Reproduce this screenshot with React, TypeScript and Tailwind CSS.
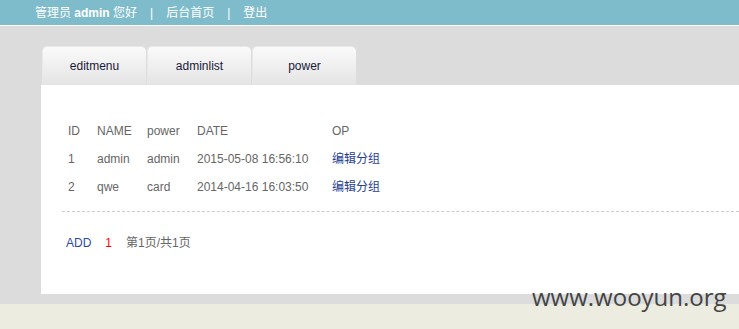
import React from 'react'

const rows = [
  { id: '1', name: 'admin', power: 'admin', date: '2015-05-08 16:56:10' },
  { id: '2', name: 'qwe', power: 'card', date: '2014-04-16 16:03:50' },
]

const tabs = ['editmenu', 'adminlist', 'power']

export default function App() {
  return (
    <div className="relative h-[329px] w-[739px] overflow-hidden bg-[#ecede0] font-['Liberation_Sans','Noto_Sans_CJK_SC',sans-serif] text-[12px]">
      {/* top bar */}
      <div className="flex h-[26px] items-center border-b border-white bg-[#7fbccb] pl-[35px] text-white">
        <span>管理员 <b>admin</b> 您好</span>
        <span className="mx-[13px]">|</span>
        <span>后台首页</span>
        <span className="mx-[13px]">|</span>
        <span>登出</span>
      </div>

      <div className="h-[278px] bg-[#dcdcdc] pl-[41px] pt-[20px]">
        {/* tabs */}
        <div className="flex gap-[1px] pl-[1px]">
          {tabs.map((t) => (
            <div
              key={t}
              className="flex h-[39px] w-[104px] items-center justify-center rounded-t-[5px] border-l border-t border-[#e8e8e8] bg-gradient-to-b from-[#fafafa] to-[#e4e4e4] text-[#1a1a3a]"
            >
              {t}
            </div>
          ))}
        </div>

        {/* panel */}
        <div className="h-[209px] bg-white pt-[32px] text-[#666]">
          <div className="pl-[27px]">
            {[{ id: 'ID', name: 'NAME', power: 'power', date: 'DATE' }, ...rows].map((r, i) => (
              <div key={i} className="flex h-[28px] items-center">
                <span className="w-[29px]">{r.id}</span>
                <span className="w-[50px]">{r.name}</span>
                <span className="w-[50px]">{r.power}</span>
                <span className="w-[135px]">{r.date}</span>
                {i === 0 ? (
                  <span>OP</span>
                ) : (
                  <a className="text-[#1f3f94]">编辑分组</a>
                )}
              </div>
            ))}
          </div>
          <div className="ml-[21px] mt-[10px] border-t border-dashed border-[#cccccc]" />
          <div className="mt-[21px] flex h-[20px] items-center pl-[25px]">
            <a className="text-[#2b4aa8]">ADD</a>
            <span className="ml-[14px] text-[#ff0000]">1</span>
            <span className="ml-[14px]">第1页/共1页</span>
          </div>
        </div>
      </div>

      {/* watermark */}
      <div className="absolute left-[532px] top-[285px] font-['Open_Sans',sans-serif] text-[24px] leading-none text-[#333] opacity-90">
        www.wooyun.org
      </div>
    </div>
  )
}
